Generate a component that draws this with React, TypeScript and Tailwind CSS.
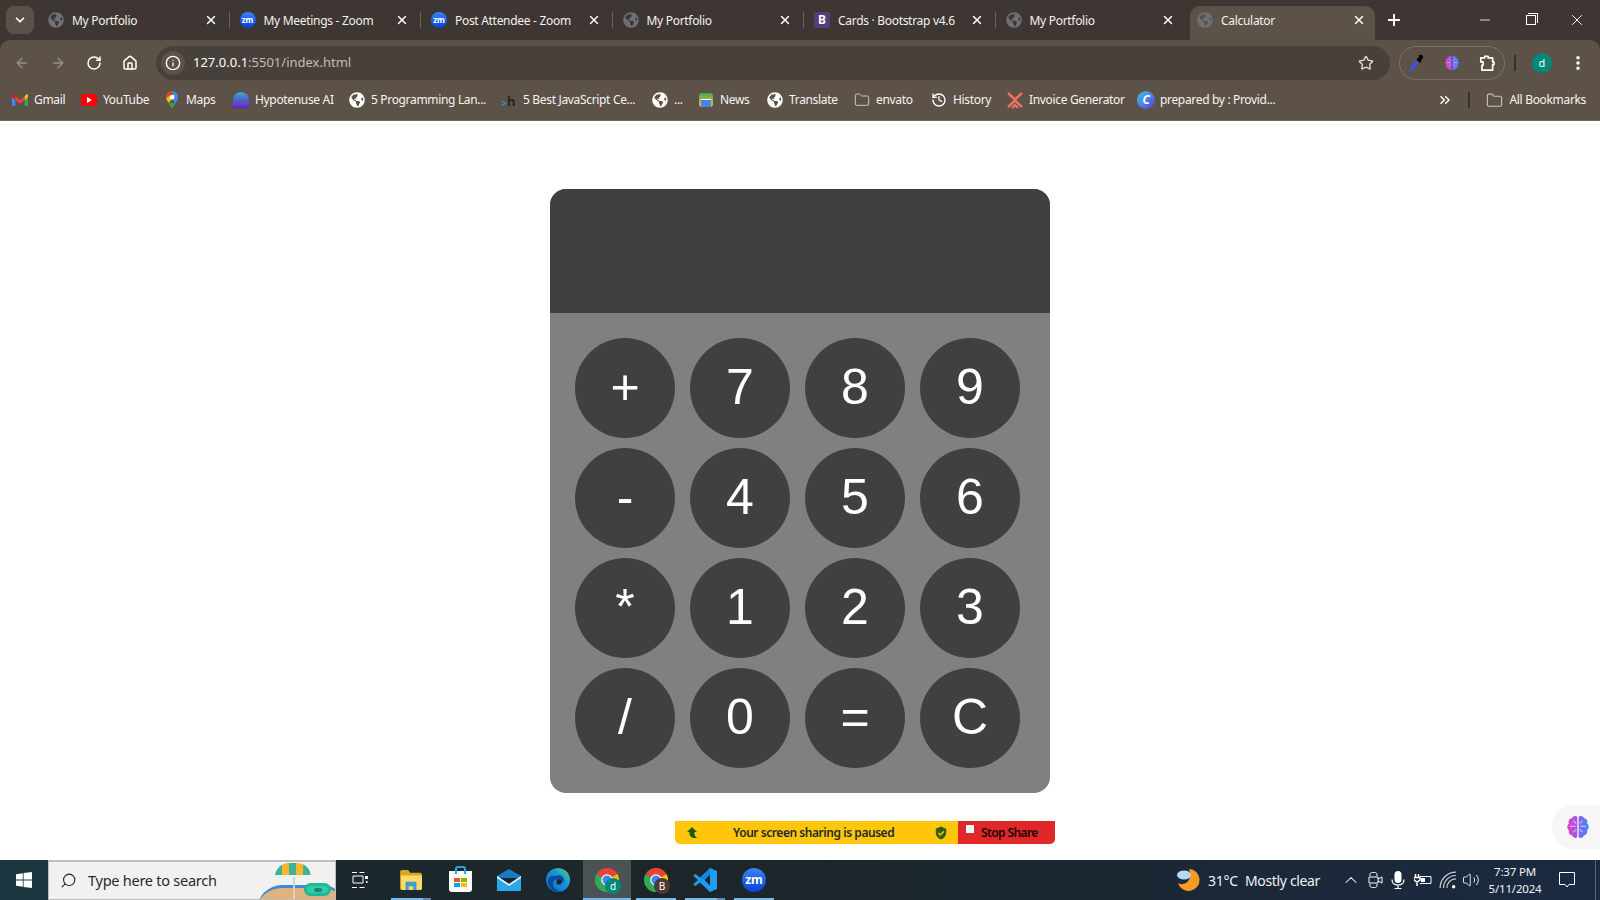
import React from 'react';
import { ArrowLeft, ArrowRight, RotateCw, House, Info, Star, EllipsisVertical, ChevronsRight, Folder, History, X, Plus, Minus, ChevronDown, ChevronUp, Volume2, Search } from 'lucide-react';
import { FaGlobeAmericas } from 'react-icons/fa';

const UI = "font-['Noto_Sans','Open_Sans',sans-serif]";

const ZoomIcon: React.FC<{ size?: string }> = ({ size = 'w-4 h-4 text-[8px]' }) => (
  <span className={`${size} rounded-full bg-gradient-to-b from-[#3b82f6] to-[#0b3fd9] text-white font-bold flex items-center justify-center shrink-0 leading-none`}>zm</span>
);

const Brain: React.FC<{ className?: string }> = ({ className }) => (
  <svg viewBox="0 0 24 24" className={className}>
    <defs>
      <linearGradient id="brainGrad" x1="0" x2="1" y1="0" y2="0">
        <stop offset="0" stopColor="#f03cc0" />
        <stop offset="0.5" stopColor="#8a5cf0" />
        <stop offset="1" stopColor="#3f8cf5" />
      </linearGradient>
    </defs>
    <path fill="url(#brainGrad)" d="M11.4 3.2C9.6 1.8 7.2 2.6 6.800 4.600 4.600 4.800 3.400 7 4.200 8.900 2.400 10.200 2.400 13.400 4.200 14.800 3.600 17 5 19 7 19.200 7.600 21.400 10.200 22 11.400 20.600ZM12.600 3.200C14.400 1.800 16.800 2.600 17.200 4.600 19.400 4.800 20.600 7 19.800 8.900 21.600 10.200 21.600 13.400 19.800 14.800 20.400 17 19 19 17 19.200 16.400 21.400 13.800 22 12.600 20.600Z" />
    <path fill="none" stroke="#fff" strokeOpacity="0.55" strokeWidth="1" d="M5 11.500h5M14 11.500h5M8 6.500l2.500 2.500M16 6.500L13.500 9M8 16.500l2.500-2.500M16 16.500L13.500 14" />
  </svg>
);

const ChromeLogo: React.FC<{ className?: string }> = ({ className }) => (
  <svg viewBox="0 0 24 24" className={className}>
    <path fill="#ea4335" d="M12 12L1.600 6A12 12 0 0 1 22.400 6Z" />
    <path fill="#fbbc04" d="M12 12L22.400 6A12 12 0 0 1 12 24Z" />
    <path fill="#34a853" d="M12 12L12 24A12 12 0 0 1 1.600 6Z" />
    <circle cx="12" cy="12" r="5.800" fill="#fff" />
    <circle cx="12" cy="12" r="4.600" fill="#4285f4" />
  </svg>
);

const tabs = [
  { title: 'My Portfolio', icon: 'globe' },
  { title: 'My Meetings - Zoom', icon: 'zoom' },
  { title: 'Post Attendee - Zoom', icon: 'zoom' },
  { title: 'My Portfolio', icon: 'globe' },
  { title: 'Cards · Bootstrap v4.6', icon: 'bootstrap' },
  { title: 'My Portfolio', icon: 'globe' },
];

const TabIcon: React.FC<{ kind: string }> = ({ kind }) => {
  if (kind === 'zoom') return <ZoomIcon />;
  if (kind === 'bootstrap') return <span className="w-4 h-4 rounded-[3px] bg-[#563d7c] text-white text-[12px] font-bold flex items-center justify-center shrink-0 leading-none">B</span>;
  return <FaGlobeAmericas className="w-4 h-4 text-[#6d7175] shrink-0" />;
};

const bookmarks: { label: string; width: string; icon: React.ReactNode }[] = [
  {
    label: 'Gmail', width: 'w-[69px]', icon: (
      <svg viewBox="0 0 24 18" className="w-4 h-3.5">
        <path fill="#4285f4" d="M0 3h5v15H2a2 2 0 0 1-2-2Z" />
        <path fill="#34a853" d="M19 3h5v13a2 2 0 0 1-2 2h-3Z" />
        <path fill="#ea4335" d="M5 3l7 6 7-6V9l-7 5.500L5 9Z" />
        <path fill="#fbbc04" d="M19 3l2-2c1.400-1 3-.2 3 1.500V5l-5 4Z" />
        <path fill="#c5221f" d="M5 3L3 1C1.600 0 0 .8 0 2.500V5l5 4Z" />
      </svg>
    ),
  },
  {
    label: 'YouTube', width: 'w-[83px]', icon: (
      <span className="w-4 h-3 rounded-[3px] bg-[#f00] flex items-center justify-center">
        <span className="border-l-[5px] border-l-white border-y-[3px] border-y-transparent" />
      </span>
    ),
  },
  {
    label: 'Maps', width: 'w-[69px]', icon: (
      <svg viewBox="0 0 24 32" className="w-3.5 h-[18px]">
        <path fill="#34a853" d="M6 21l6 11c2-5 4-7 6-10Z" />
        <path fill="#4285f4" d="M12 0c4 0 8 2 10 6L14 14Z" />
        <path fill="#ea4335" d="M12 0C6 0 1 4 2 12l8-6Z" />
        <path fill="#fbbc04" d="M2 12c0 4 2 6 4 9L18 8l-6-2Z" />
        <path fill="#4285f4" d="M22 6c2 5 0 11-4 16l-6-8Z" />
        <circle cx="12" cy="11" r="4" fill="#fff" />
      </svg>
    ),
  },
  {
    label: 'Hypotenuse AI', width: 'w-[116px]', icon: (
      <span className="w-4 h-4 rounded-t-full rounded-b-[4px] bg-gradient-to-b from-[#3fa6c4] via-[#4b62c8] to-[#6a12d0]" />
    ),
  },
  { label: '5 Programming Lan...', width: 'w-[152px]', icon: <FaGlobeAmericas className="w-4 h-4 text-white" /> },
  {
    label: '5 Best JavaScript Ce...', width: 'w-[151px]', icon: (
      <span className="w-4 h-4 flex items-end text-[11px] font-bold leading-none">
        <span className="text-[#3f86bd]">&gt;</span><span className="text-[#20262b] text-[13px]">h</span>
      </span>
    ),
  },
  { label: '...', width: 'w-[46px]', icon: <FaGlobeAmericas className="w-4 h-4 text-white" /> },
  {
    label: 'News', width: 'w-[69px]', icon: (
      <span className="w-3.5 h-3.5 rounded-[3px] bg-gradient-to-b from-[#34a853] to-[#fbbc04] flex items-end justify-center">
        <span className="w-2.5 h-2 bg-[#4285f4] border-t border-white" />
      </span>
    ),
  },
  { label: 'Translate', width: 'w-[87px]', icon: <FaGlobeAmericas className="w-4 h-4 text-white" /> },
  { label: 'envato', width: 'w-[77px]', icon: <Folder className="w-4 h-4 text-[#c9c4bf]" strokeWidth={1.5} /> },
  { label: 'History', width: 'w-[76px]', icon: <History className="w-4 h-4 text-white" strokeWidth={2} /> },
  {
    label: 'Invoice Generator', width: 'w-[131px]', icon: (
      <svg viewBox="0 0 16 16" className="w-[18px] h-[18px]">
        <path fill="none" stroke="#f0705f" strokeWidth="2.400" d="M1 1l7 6.500L15 1M1 15l7-6.500L15 15M5 16l3-3 3 3" />
      </svg>
    ),
  },
  {
    label: 'prepared by : Provid...', width: 'w-[150px]', icon: (
      <span className="w-[18px] h-[18px] rounded-full bg-gradient-to-br from-[#14c4e8] to-[#5b2fd8] text-white text-[12px] italic font-bold flex items-center justify-center leading-none shrink-0">C</span>
    ),
  },
];

const keys = ['+', '7', '8', '9', '-', '4', '5', '6', '*', '1', '2', '3', '/', '0', '=', 'C'];

const Underline: React.FC<{ stacked?: boolean }> = ({ stacked }) => (
  <span className="absolute bottom-0 left-1 right-1 h-0.5 bg-[#76b9ed] flex justify-end">
    {stacked && <span className="w-2 h-full bg-[#5a8cb4]" />}
  </span>
);

const App: React.FC = () => {
  return (
    <div className={`${UI} h-screen w-[1600px] overflow-hidden flex flex-col bg-white relative`}>
      {/* Tab strip */}
      <div className="h-10 bg-[#3e3632] flex items-end shrink-0 text-[#f4f1ee] text-xs">
        <div className="w-[38px] h-full flex items-center pl-1.5 shrink-0">
          <button className="w-7 h-7 rounded-lg bg-[#5a5149] flex items-center justify-center">
            <ChevronDown className="w-3.5 h-3.5 text-white" strokeWidth={3} />
          </button>
        </div>
        {tabs.map((t, i) => (
          <div key={i} className="w-[191.5px] h-full flex items-center shrink-0 relative pl-[10px]">
            <TabIcon kind={t.icon} />
            <span className="ml-2 pt-px tracking-[-0.3px] whitespace-nowrap">{t.title}</span>
            <X className="absolute right-[12px] w-3.5 h-3.5 text-white" strokeWidth={2.5} />
            {i < tabs.length - 1 && <span className="absolute right-0 top-3 bottom-3 w-px bg-[#6b625a]" />}
          </div>
        ))}
        <div className="w-[185px] h-[34px] ml-[3px] bg-[#5c5248] rounded-t-[10px] flex items-center pl-[7px] pb-[6px] relative shrink-0">
          <FaGlobeAmericas className="w-4 h-4 text-[#6d7175] shrink-0" />
          <span className="ml-2 pt-px tracking-[-0.3px]">Calculator</span>
          <X className="absolute right-[9px] top-[7px] w-3.5 h-3.5 text-white" strokeWidth={2.5} />
        </div>
        <div className="flex-1 h-full flex items-center text-white">
          <Plus className="w-[18px] h-[18px] ml-[10px]" strokeWidth={2.5} />
          <div className="ml-auto flex items-center">
            <div className="w-[46px] flex justify-center"><Minus className="w-4 h-4" strokeWidth={1.25} /></div>
            <div className="w-[46px] flex justify-center">
              <span className="w-2.5 h-2.5 border border-white relative">
                <span className="absolute -top-[3px] -right-[3px] w-2.5 h-2.5 border-t border-r border-white" />
              </span>
            </div>
            <div className="w-[46px] flex justify-center"><X className="w-[18px] h-[18px]" strokeWidth={1.25} /></div>
          </div>
        </div>
      </div>

      {/* Toolbar and bookmarks */}
      <div className="h-[81px] bg-[#3e3632] shrink-0">
        <div className="h-full bg-[#5c5248] rounded-t-[10px] border-b border-[#6e655c] flex flex-col">
          <div className="h-10 flex items-center pt-1.5 shrink-0">
            <div className="w-[156px] flex items-center pl-3.5 gap-5 shrink-0">
              <ArrowLeft className="w-4 h-4 text-[#97908a]" strokeWidth={2} />
              <ArrowRight className="w-4 h-4 text-[#97908a]" strokeWidth={2} />
              <RotateCw className="w-4 h-4 text-white" strokeWidth={2.25} />
              <House className="w-4 h-4 text-white" strokeWidth={2.25} />
            </div>
            <div className="w-[1234px] h-[34px] rounded-full bg-[#48413b] flex items-center pl-[5px] pr-4 shrink-0">
              <span className="w-6 h-6 rounded-full bg-[#5c5248] flex items-center justify-center shrink-0">
                <Info className="w-4 h-4 text-white" strokeWidth={2} />
              </span>
              <span className="ml-[8px] text-[13px] text-white">127.0.0.1<span className="text-[#c3bdb7]">:5501/index.html</span></span>
              <Star className="ml-auto w-4 h-4 text-[#e3dfdb]" strokeWidth={2} />
            </div>
            <div className="ml-[9px] w-[106px] h-[34px] rounded-full border border-[#7a7168] flex items-center justify-between pl-[8px] pr-[8px] shrink-0">
              <svg viewBox="0 0 16 16" className="w-[18px] h-[18px]">
                <path fill="#000" d="M9.500 1.500a2.200 2.200 0 0 1 3.400 2.800l-1.500 1.500.7.7-1.400 1.400-3.200-3.200 1.400-1.400.7.7Z" />
                <path fill="#3d52d5" d="M6.500 5.500l3 3-5 6c-.8.6-2.500 1-3 .5s-.1-2 .5-3Z" />
              </svg>
              <Brain className="w-[18px] h-[18px]" />
              <svg viewBox="0 0 16 16" className="w-[18px] h-[18px]">
                <path fill="none" stroke="#fff" strokeWidth="1.500" strokeLinejoin="round" d="M2.500 3.500H6V2h3v1.500h4V7h1.200v2.400H13v5H3.500V10H4.500V7H2.500Z" />
              </svg>
            </div>
            <span className="ml-[9px] w-0.5 h-4 bg-[#37302b] shrink-0" />
            <span className="ml-[16px] w-5 h-5 rounded-full bg-[#00897b] text-white text-[11px] flex items-center justify-center shrink-0">d</span>
            <EllipsisVertical className="ml-[17px] w-[18px] h-[18px] text-white shrink-0" strokeWidth={2.75} />
          </div>
          <div className="flex-1 flex items-center pl-3 text-xs text-[#f7f4f1] tracking-[-0.33px]">
            {bookmarks.map((b) => (
              <div key={b.label + b.width} className={`${b.width} flex items-center shrink-0 whitespace-nowrap`}>
                <span className="w-4 h-4 flex items-center justify-center shrink-0">{b.icon}</span>
                <span className="ml-[6px]">{b.label}</span>
              </div>
            ))}
            <div className="ml-auto flex items-center pr-[14px]">
              <ChevronsRight className="w-4 h-4 text-white" strokeWidth={2.25} />
              <span className="ml-[15px] w-0.5 h-4 bg-[#37302b]" />
              <Folder className="ml-[16px] w-[17px] h-[17px] text-[#c9c4bf]" strokeWidth={1.5} />
              <span className="ml-[7px]">All Bookmarks</span>
            </div>
          </div>
        </div>
      </div>

      {/* Page */}
      <main className="flex-1 min-h-0 pt-[68px] relative">
        <div className="w-[500px] mx-auto rounded-[16px] overflow-hidden bg-[#808080] font-['Liberation_Sans',Arial,sans-serif]">
          <div className="h-[124px] bg-[#404040]" />
          <div className="grid grid-cols-[repeat(4,100px)] gap-x-[15px] gap-y-[10px] pt-[25px] pb-[25px] pl-[25px]">
            {keys.map((k) => (
              <button key={k} className="w-[100px] h-[100px] rounded-full bg-[#404040] text-white text-[50px] leading-none pb-[3px] flex items-center justify-center">{k}</button>
            ))}
          </div>
        </div>

        {/* Zoom share bar */}
        <div className="absolute left-[675px] top-[700px] w-[380px] h-[23px] flex rounded-b-[5px] overflow-hidden text-[12px] font-semibold font-['Noto_Sans',sans-serif] tracking-[-0.45px]">
          <div className="w-[283px] bg-[#ffc60b] flex items-center text-[#1d2b2a] relative">
            <svg viewBox="0 0 12 12" className="absolute left-3 w-3 h-3">
              <path fill="#1e5a00" d="M5 0L0 5h2.500v2c0 2 2 3.500 4 4h4c-2-1-3-2.500-3-4V5H10Z" />
            </svg>
            <span className="ml-[58px] whitespace-nowrap">Your screen sharing is paused</span>
            <svg viewBox="0 0 24 24" className="absolute right-[10px] w-3.5 h-3.5">
              <path fill="#2f6010" d="M12 1l9 3.500V11c0 6-4 10-9 12-5-2-9-6-9-12V4.500Z" />
              <path fill="none" stroke="#ffc60b" strokeWidth="2.500" d="M7.500 12l3.500 3.500 6-6.500" />
            </svg>
          </div>
          <div className="flex-1 bg-[#e02828] flex items-center text-[#1a0505] relative">
            <span className="absolute left-2 top-1 w-2 h-2 bg-[#e8fbff]" />
            <span className="ml-[23px] whitespace-nowrap tracking-[-0.6px]">Stop Share</span>
          </div>
        </div>

        {/* Floating brain widget */}
        <div className="absolute right-0 top-[684px] w-12 h-11 rounded-l-[22px] bg-[#f6f6f6] flex items-center pl-3">
          <Brain className="w-7 h-7" />
        </div>
      </main>

      {/* Windows taskbar */}
      <footer className="h-10 shrink-0 flex items-stretch bg-gradient-to-r from-[#1d2a30] via-[#1c2529] to-[#1b2a42] text-white">
        <div className="w-12 bg-[#1c3640] flex items-center justify-center shrink-0">
          <svg viewBox="0 0 16 16" className="w-4 h-4">
            <path fill="#fff" d="M0 2.200l6.800-1v6.400H0ZM7.600 1.100L16 0v7.600H7.600ZM0 8.400h6.800v6.400L0 13.800ZM7.600 8.400H16V16l-8.400-1.100Z" />
          </svg>
        </div>
        <div className="w-[288px] bg-[#f1f1f1] border-t-2 border-x border-b border-[#bdbdbd] flex items-center pl-[11px] relative overflow-hidden shrink-0 text-[#1f2933]">
          <Search className="w-[17px] h-[17px] -scale-x-100 text-[#222]" strokeWidth={1.5} />
          <span className="ml-[11px] text-[14.5px] tracking-[-0.25px] whitespace-nowrap">Type here to search</span>
          <span className="absolute right-[-12px] top-[23px] w-[90px] h-[50px] rounded-full bg-[#e2b27c] border-t-[3px] border-[#3b8bd8]" />
          <span className="absolute left-[244px] top-[4px] bottom-0 w-[2px] bg-[#d9cfd0]" />
          <span className="absolute right-[24px] top-[1px] w-9 h-[14px] rounded-t-full bg-[repeating-linear-gradient(90deg,#3fb39a_0,#3fb39a_7px,#f6b72b_7px,#f6b72b_14px)] border-b-2 border-[#eee]" />
          <span className="absolute right-[4px] top-[21px] w-[27px] h-[13px] rounded-full bg-[#2ecfa8] border-[3px] border-[#25b592] flex items-center justify-center"><span className="w-2 h-1 rounded-full bg-[#128a70]" /></span>
        </div>
        <div className="w-[51px] flex items-center justify-center pr-1 shrink-0">
          <svg viewBox="0 0 16 16" className="w-4 h-4">
            <path fill="none" stroke="#fff" strokeWidth="1" d="M0 .500h5M7.500 .500h5M1 4h10v7H1ZM0 15.500h5M7.500 15.500h5" />
            <rect x="13" y="4" width="3" height="3" fill="#fff" />
            <rect x="14" y="9" width="1.500" height="2" fill="#fff" />
          </svg>
        </div>
        <div className="flex items-stretch gap-px">
          <div className="w-12 flex items-center justify-center relative">
            <svg viewBox="0 0 24 22" className="w-[22px] h-5">
              <path fill="#d9a326" d="M0 2a2 2 0 0 1 2-2h7l2 3h11a2 2 0 0 1 2 2v15a2 2 0 0 1-2 2H2a2 2 0 0 1-2-2Z" />
              <path fill="#ffd966" d="M1 6h23v14a2 2 0 0 1-2 2H3a2 2 0 0 1-2-2Z" />
              <path fill="#3f9ad6" d="M6 13h12v9h-3.500v-4h-5v4H6Z" />
            </svg>
            <Underline stacked />
          </div>
          <div className="w-12 flex items-center justify-center relative">
            <span className="w-[23px] h-[21px] mt-[2px] rounded-b-[3px] bg-[#fafafa] relative grid grid-cols-2 gap-px p-[5px] pt-[7px]">
              <span className="absolute -top-[5px] left-[6px] w-[11px] h-2 border-2 border-b-0 border-[#2aa7e0] rounded-t-[3px]" />
              <span className="bg-[#f25022]" /><span className="bg-[#7fba00]" /><span className="bg-[#00a4ef]" /><span className="bg-[#ffb900]" />
            </span>
          </div>
          <div className="w-12 flex items-center justify-center relative">
            <svg viewBox="0 0 24 22" className="w-6 h-[22px]">
              <path fill="#1b78c8" d="M0 7L12 0l12 7v2H0Z" />
              <path fill="#28a8ea" d="M0 7l12 8 12-8v15H0Z" />
              <path fill="#ffffff" d="M0 7l12 8 12-8v2l-12 8L0 9Z" opacity="0.9" />
            </svg>
          </div>
          <div className="w-12 flex items-center justify-center relative">
            <svg viewBox="0 0 24 24" className="w-6 h-6">
              <defs>
                <linearGradient id="edgeTop" x1="0" x2="1" y1="1" y2="0">
                  <stop offset="0" stopColor="#0c6fd0" />
                  <stop offset="0.6" stopColor="#1793d8" />
                  <stop offset="1" stopColor="#5fd86c" />
                </linearGradient>
              </defs>
              <circle cx="12" cy="12" r="12" fill="url(#edgeTop)" />
              <path fill="#0b4c98" d="M9 8c4-2 9 0 9 4 0 2-2 3-4 3-3 0-4-2-3-4-4 1-5 5-3 8 1 2 4 4 7 4 2 0 4-1 5-2-3 3-8 4-12 2S1 16 2 12c1-3 4-5 7-4Z" />
              <circle cx="13" cy="14" r="2.600" fill="#1c2529" />
            </svg>
          </div>
          <div className="w-12 flex items-center justify-center relative bg-[#4b5256]">
            <span className="relative w-6 h-6">
              <ChromeLogo className="w-6 h-6" />
              <span className="absolute -right-0.5 -bottom-0.5 w-4 h-4 rounded-full bg-[#00897b] text-[10px] flex items-center justify-center leading-none">d</span>
            </span>
            <span className="absolute bottom-0 left-0 right-0 h-0.5 bg-[#76b9ed]" />
          </div>
          <div className="w-12 flex items-center justify-center relative">
            <span className="relative w-6 h-6">
              <ChromeLogo className="w-6 h-6" />
              <span className="absolute -right-0.5 -bottom-0.5 w-4 h-4 rounded-full bg-[#4e3a30] text-[10px] flex items-center justify-center leading-none">B</span>
            </span>
            <Underline />
          </div>
          <div className="w-12 flex items-center justify-center relative">
            <svg viewBox="0 0 24 24" className="w-6 h-6">
              <path fill="#1f9cf0" d="M17 0l7 3v18l-7 3L7 14.500 2.500 18 0 16.500 5 12 0 7.500 2.500 6 7 9.500Zm0 6.500L11.500 12l5.500 5.500Z" />
              <path fill="#0a6fc0" d="M17 0v6.500L11.500 12 7 9.500Z" opacity="0.5" />
            </svg>
            <Underline stacked />
          </div>
          <div className="w-12 flex items-center justify-center relative">
            <ZoomIcon size="w-6 h-6 text-[12px]" />
            <Underline />
          </div>
        </div>

        {/* Tray */}
        <div className="flex-1 flex items-center justify-end text-[#f1f3f4]">
          <svg viewBox="0 0 24 24" className="w-6 h-6 shrink-0">
            <path fill="#f59a23" d="M13 1a11 11 0 1 1-11 14c2 1.500 5 1.500 8 0 4-2 5-8 3-14Z" />
            <ellipse cx="8" cy="7" rx="7" ry="4.500" fill="#b9d6f2" />
          </svg>
          <span className="ml-[8px] text-[14px] whitespace-nowrap tracking-[-0.2px]">31°C</span>
          <span className="ml-[7px] text-[14px] whitespace-nowrap tracking-[-0.35px]">Mostly clear</span>
          <ChevronUp className="ml-[21px] w-5 h-5 shrink-0" strokeWidth={1.25} />
          <svg viewBox="0 0 16 18" className="ml-[7px] w-4 h-[18px] shrink-0">
            <path fill="none" stroke="#fff" strokeWidth="1" d="M2 5V3.500C2 2 3 1.500 4.500 1.500h2C8 1.500 9 2 9 3.500V5M2 13v1.500C2 16 3 16.500 4.500 16.500h2C8 16.500 9 16 9 14.500V13M1 6h9v6H1ZM10 8l4-2v6l-4-2" />
          </svg>
          <svg viewBox="0 0 18 18" className="ml-[5px] w-[18px] h-[18px] shrink-0">
            <rect x="5.500" y="0" width="7" height="12" rx="3.500" fill="#fff" />
            <path fill="none" stroke="#fff" strokeWidth="1.200" d="M3 8.500c0 3.500 2.500 5.500 6 5.500s6-2 6-5.500M9 14v3.500M5.500 17.500h7" />
          </svg>
          <svg viewBox="0 0 18 12" className="ml-[7px] w-[18px] h-3 shrink-0">
            <path fill="none" stroke="#fff" strokeWidth="1" d="M6 2.500h11v7H6" />
            <rect x="7" y="4" width="4" height="4" fill="#fff" />
            <path fill="none" stroke="#fff" strokeWidth="1.500" d="M1.500 0v3M4.500 0v3M0 3.500h6V6L3 8 0 6ZM3 8v4" />
          </svg>
          <svg viewBox="0 0 16 16" className="ml-[7px] w-[18px] h-[18px] shrink-0">
            <path fill="none" stroke="#cfd3d6" strokeWidth="1" d="M1 15A14 14 0 0 1 15 1M4 15A11 11 0 0 1 15 4M7 15a8 8 0 0 1 8-8" />
            <circle cx="13" cy="14" r="1.500" fill="#fff" />
          </svg>
          <Volume2 className="ml-[5px] w-[18px] h-[18px] shrink-0" strokeWidth={1.25} />
          <div className="ml-[2px] w-[66px] flex flex-col items-center text-[11.5px] tracking-[-0.2px] leading-[17px] shrink-0">
            <span>7:37 PM</span>
            <span>5/11/2024</span>
          </div>
          <svg viewBox="0 0 16 16" className="ml-[11px] w-4 h-4 shrink-0">
            <path fill="none" stroke="#fff" strokeWidth="1" d="M.500 .500h15v12H10l-2 2.500-2-2.500H.500Z" />
          </svg>
          <span className="ml-[20px] w-px h-full bg-[#5a6472] shrink-0" />
          <span className="w-1 shrink-0" />
        </div>
      </footer>
    </div>
  );
};

export default App;
